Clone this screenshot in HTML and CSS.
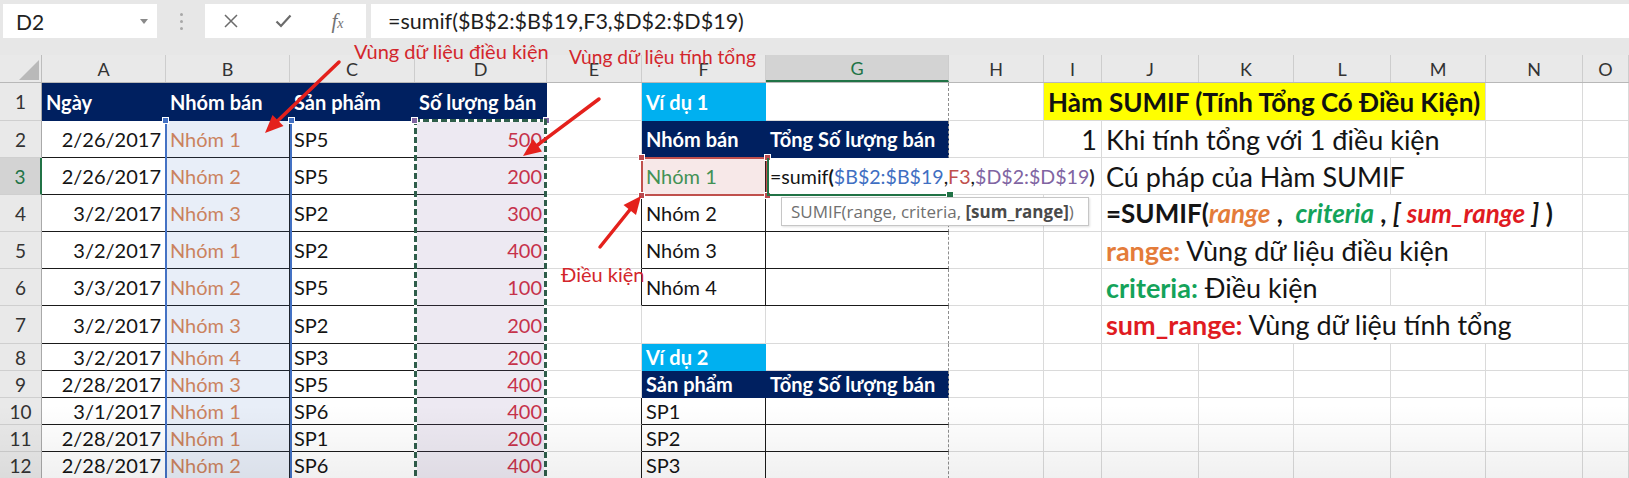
FILE: index.html
```html
<!DOCTYPE html>
<html lang="vi">
<head>
<meta charset="utf-8">
<title>Hàm SUMIF</title>
<link rel="stylesheet" href="styles.css">
</head>
<body>
<div class="toolbar">
  <div class="namebox">D2<span class="dd"></span></div>
  <div class="vdots"><i></i><i></i><i></i></div>
  <div class="fxbtns">
    <span class="btn"><svg width="14" height="14" viewBox="0 0 14 14"><path d="M1 1L13 13M13 1L1 13" stroke="#6b6b6b" stroke-width="1.5" fill="none"/></svg></span>
    <span class="btn"><svg width="17" height="14" viewBox="0 0 17 14"><path d="M1.5 7.5L6 12L15.5 1.5" stroke="#6b6b6b" stroke-width="2.2" fill="none"/></svg></span>
    <span class="btn fx">f<span>x</span></span>
  </div>
  <div class="formula">=sumif($B$2:$B$19,F3,$D$2:$D$19)</div>
</div>

<div class="sheet">
  <div class="colhdr">
    <div class="corner"><span class="tri"></span></div>
    <div>A</div><div>B</div><div>C</div><div>D</div><div>E</div><div>F</div><div class="sel">G</div><div>H</div><div>I</div><div>J</div><div>K</div><div>L</div><div>M</div><div>N</div><div>O</div>
  </div>

  <div class="row r1">
    <div class="rh">1</div>
    <div class="c h">Ngày</div><div class="c h">Nhóm bán</div><div class="c h">Sản phẩm</div><div class="c h">Số lượng bán</div>
    <div class="c"></div>
    <div class="c cy">Ví dụ 1</div><div class="c pb"></div>
    <div class="c"></div>
    <div class="c yl s5">Hàm SUMIF (Tính Tổng Có Điều Kiện)</div>
    <div class="c"></div><div class="c"></div>
  </div>

  <div class="row rt">
    <div class="rh">2</div>
    <div class="c bd n">2/26/2017</div><div class="c bd o">Nhóm 1</div><div class="c bd">SP5</div><div class="c bd n red">500</div>
    <div class="c"></div>
    <div class="c h">Nhóm bán</div><div class="c h pb">Tổng Số lượng bán</div>
    <div class="c"></div>
    <div class="c n big">1</div>
    <div class="c big s4">Khi tính tổng với 1 điều kiện</div>
    <div class="c"></div><div class="c"></div>
  </div>

  <div class="row rt">
    <div class="rh sel">3</div>
    <div class="c bd n">2/26/2017</div><div class="c bd o">Nhóm 2</div><div class="c bd">SP5</div><div class="c bd n red">200</div>
    <div class="c bl"></div>
    <div class="c bd g">Nhóm 1</div>
    <div class="c s3 fm"><span>=sumif<b>(</b><span class="fb">$B$2:$B$19</span>,<span class="fr">F3</span>,<span class="fp">$D$2:$D$19</span><b>)</b></span></div>
    <div class="c big s3">Cú pháp của Hàm SUMIF</div>
    <div class="c"></div><div class="c"></div><div class="c"></div>
  </div>

  <div class="row rt">
    <div class="rh">4</div>
    <div class="c bd n">3/2/2017</div><div class="c bd o">Nhóm 3</div><div class="c bd">SP2</div><div class="c bd n red">300</div>
    <div class="c bl"></div>
    <div class="c bd">Nhóm 2</div><div class="c bd pb"></div>
    <div class="c"></div><div class="c"></div>
    <div class="c big s5 syn"><span>=SUMIF(<i class="io">range</i> ,&nbsp; <i class="ig">criteria</i> , <i>[</i> <i class="ir">sum_range</i> <i>]</i> )</span></div>
    <div class="c"></div>
  </div>

  <div class="row rt">
    <div class="rh">5</div>
    <div class="c bd n">3/2/2017</div><div class="c bd o">Nhóm 1</div><div class="c bd">SP2</div><div class="c bd n red">400</div>
    <div class="c bl"></div>
    <div class="c bd">Nhóm 3</div><div class="c bd pb"></div>
    <div class="c"></div><div class="c"></div>
    <div class="c big s4"><span><b class="ko">range:</b> Vùng dữ liệu điều kiện</span></div>
    <div class="c"></div><div class="c"></div>
  </div>

  <div class="row rt">
    <div class="rh">6</div>
    <div class="c bd n">3/3/2017</div><div class="c bd o">Nhóm 2</div><div class="c bd">SP5</div><div class="c bd n red">100</div>
    <div class="c bl"></div>
    <div class="c bd">Nhóm 4</div><div class="c bd pb"></div>
    <div class="c"></div><div class="c"></div>
    <div class="c big s3"><span><b class="kg">criteria:</b> Điều kiện</span></div>
    <div class="c"></div><div class="c"></div><div class="c"></div>
  </div>

  <div class="row rt7">
    <div class="rh">7</div>
    <div class="c bd n">3/2/2017</div><div class="c bd o">Nhóm 3</div><div class="c bd">SP2</div><div class="c bd n red">200</div>
    <div class="c"></div>
    <div class="c"></div><div class="c pb"></div>
    <div class="c"></div><div class="c"></div>
    <div class="c big s5"><span><b class="kr">sum_range:</b> Vùng dữ liệu tính tổng</span></div>
    <div class="c"></div>
  </div>

  <div class="row rs">
    <div class="rh">8</div>
    <div class="c bd n">3/2/2017</div><div class="c bd o">Nhóm 4</div><div class="c bd">SP3</div><div class="c bd n red">200</div>
    <div class="c"></div>
    <div class="c cy">Ví dụ 2</div><div class="c pb"></div>
    <div class="c"></div><div class="c"></div><div class="c"></div><div class="c"></div><div class="c"></div><div class="c"></div><div class="c"></div><div class="c"></div>
  </div>

  <div class="row rs">
    <div class="rh">9</div>
    <div class="c bd n">2/28/2017</div><div class="c bd o">Nhóm 3</div><div class="c bd">SP5</div><div class="c bd n red">400</div>
    <div class="c"></div>
    <div class="c h">Sản phẩm</div><div class="c h pb">Tổng Số lượng bán</div>
    <div class="c"></div><div class="c"></div><div class="c"></div><div class="c"></div><div class="c"></div><div class="c"></div><div class="c"></div><div class="c"></div>
  </div>

  <div class="row rs">
    <div class="rh">10</div>
    <div class="c bd n">3/1/2017</div><div class="c bd o">Nhóm 1</div><div class="c bd">SP6</div><div class="c bd n red">400</div>
    <div class="c bl"></div>
    <div class="c bd">SP1</div><div class="c bd pb"></div>
    <div class="c"></div><div class="c"></div><div class="c"></div><div class="c"></div><div class="c"></div><div class="c"></div><div class="c"></div><div class="c"></div>
  </div>

  <div class="row rs">
    <div class="rh">11</div>
    <div class="c bd n">2/28/2017</div><div class="c bd o">Nhóm 1</div><div class="c bd">SP1</div><div class="c bd n red">200</div>
    <div class="c bl"></div>
    <div class="c bd">SP2</div><div class="c bd pb"></div>
    <div class="c"></div><div class="c"></div><div class="c"></div><div class="c"></div><div class="c"></div><div class="c"></div><div class="c"></div><div class="c"></div>
  </div>

  <div class="row rs">
    <div class="rh">12</div>
    <div class="c bd n">2/28/2017</div><div class="c bd o">Nhóm 2</div><div class="c bd">SP6</div><div class="c bd n red">400</div>
    <div class="c bl"></div>
    <div class="c bd">SP3</div><div class="c bd pb"></div>
    <div class="c"></div><div class="c"></div><div class="c"></div><div class="c"></div><div class="c"></div><div class="c"></div><div class="c"></div><div class="c"></div>
  </div>
</div>

<!-- overlays: range highlights, tooltip, annotations -->
<div class="rng-b"><span class="hd hd-tl"></span><span class="hd hd-tr"></span></div>
<div class="rng-d"><span class="ants-top"></span><span class="hd hd-tl"></span><span class="hd hd-tr"></span></div>
<div class="rng-f"><span class="hd hd-tl"></span><span class="hd hd-tr"></span><span class="hd hd-bl"></span><span class="hd hd-br"></span></div>
<div class="active"><span class="fill-handle"></span></div>
<div class="tip"><span>SUMIF(range, criteria, <b>[sum_range]</b>)</span></div>

<div class="note note1">Vùng dữ liệu điều kiện</div>
<div class="note note2">Vùng dữ liệu tính tổng</div>
<div class="note note3">Điều kiện</div>

<svg class="arrows" width="1629" height="478" viewBox="0 0 1629 478">
  <g stroke="#e4211c" stroke-width="3.5" stroke-linecap="round" fill="none">
    <line x1="339" y1="62" x2="278" y2="120.5"/>
    <line x1="599" y1="99" x2="537.4" y2="145.2"/>
    <line x1="600" y1="247" x2="629.7" y2="210"/>
  </g>
  <g fill="#e4211c">
    <polygon points="265,133 283.5,126 272.5,115"/>
    <polygon points="523,156 542,151.5 533,139"/>
    <polygon points="641,196 636,215 623.5,205"/>
  </g>
</svg>
<div class="shade"></div>
</body>
</html>
```

FILE: styles.css
```css
* { box-sizing: border-box; margin: 0; padding: 0; }

html, body {
  width: 1629px;
  height: 478px;
  overflow: hidden;
  background: #ffffff;
}

body {
  position: relative;
  font-family: Lato, "Liberation Sans", sans-serif;
  color: #111;
  --cols: 42px 124px 124px 125px 132px 95px 124px 183px 95px 58px 97px 95px 97px 95px 97px 46px;
}

/* ---------- toolbar ---------- */
.toolbar {
  height: 55px;
  background: #e7e7e7;
  display: flex;
  align-items: flex-start;
  padding-top: 4px;
}

.namebox {
  position: relative;
  margin-left: 3px;
  width: 154px;
  height: 34px;
  background: #fff;
  display: flex;
  align-items: center;
  padding-left: 13px;
  font-size: 21px;
  color: #222;
}

.namebox .dd {
  position: absolute;
  right: 9px;
  top: 15px;
  border-left: 4px solid transparent;
  border-right: 4px solid transparent;
  border-top: 5px solid #8a8a8a;
}

.vdots {
  width: 48px;
  height: 34px;
  display: flex;
  flex-direction: column;
  align-items: center;
  justify-content: center;
  gap: 4px;
}

.vdots i {
  display: block;
  width: 3px;
  height: 3px;
  border-radius: 50%;
  background: #a8a8a8;
}

.fxbtns {
  width: 161px;
  height: 34px;
  background: #fff;
  display: grid;
  grid-template-columns: 52px 52px 57px;
  align-items: center;
  justify-items: center;
}

.btn { display: flex; align-items: center; justify-content: center; }

.fx {
  font-family: "Liberation Serif", serif;
  font-style: italic;
  font-size: 21px;
  color: #737373;
}

.fx span { font-size: 14px; margin-top: 6px; }

.formula {
  flex: 1;
  margin-left: 5px;
  height: 34px;
  background: #fff;
  display: flex;
  align-items: center;
  padding-left: 17px;
  font-size: 21.5px;
  color: #1e1e1e;
}

/* ---------- sheet ---------- */
.colhdr {
  display: grid;
  grid-template-columns: var(--cols);
  height: 28px;
  background: #e9e9e9;
  border-bottom: 1px solid #b8b8b8;
}

.colhdr > div {
  display: flex;
  align-items: center;
  justify-content: center;
  border-right: 1px solid #cdcdcd;
  font-size: 18px;
  color: #333;
}

.colhdr > div.sel {
  background: #d3d3d3;
  color: #217346;
  border-bottom: 2px solid #217346;
}

.colhdr .corner {
  position: relative;
  border-right: 1px solid #bdbdbd;
}

.corner .tri {
  position: absolute;
  right: 2px;
  bottom: 2px;
  border-left: 20px solid transparent;
  border-bottom: 20px solid #b9b9b9;
}

.row {
  display: grid;
  grid-template-columns: var(--cols);
}

.r1 { height: 38px; }
.rt { height: 37px; }
.rt7 { height: 38px; }
.rs { height: 27px; }

.rh {
  display: flex;
  align-items: center;
  justify-content: center;
  background: #e9e9e9;
  border-right: 1px solid #a9a9a9;
  border-bottom: 1px solid #cfcfcf;
  font-size: 19px;
  color: #333;
}

.rh.sel {
  background: #d3d3d3;
  color: #217346;
  border-right: 2px solid #217346;
}

.c {
  display: flex;
  align-items: center;
  padding: 0 4px;
  white-space: nowrap;
  border-right: 1px solid #dadada;
  border-bottom: 1px solid #dadada;
  font-size: 20px;
  color: #141414;
}

.s2 { grid-column: span 2; }
.s3 { grid-column: span 3; }
.s4 { grid-column: span 4; }
.s5 { grid-column: span 5; }

.n { justify-content: flex-end; }

.bd { border-right-color: #1a1a1a; border-bottom-color: #1a1a1a; }
.bl { border-right-color: #1a1a1a; }

.h {
  background: #002060;
  color: #fff;
  font-weight: 700;
  border-right-color: #002060;
  border-bottom-color: #002060;
}

.cy {
  background: #00b0f0;
  color: #fff;
  font-weight: 700;
  border-right-color: #00b0f0;
  border-bottom-color: #00b0f0;
}

.pb { border-right: 1px dashed #8e8e8e; }

.o { color: #de8550; }
.red { color: #d22a3c; }
.g { color: #2f9c57; }

.fm { font-size: 19.6px; }
.fm b { font-weight: 700; }
.fb { color: #3f6fc2; }
.fr { color: #c0504d; }
.fp { color: #8064a2; }

.yl {
  background: #ffff00;
  font-weight: 700;
  font-size: 26px;
  color: #111;
  border-right-color: #dadada;
}

.big { font-size: 27px; }

.syn { font-weight: 700; font-size: 26px; }
.syn i { font-style: italic; }
.io { color: #e47c3a; }
.ig { color: #14a35a; }
.ir { color: #e01b22; }

.ko { color: #e47c3a; }
.kg { color: #14a35a; }
.kr { color: #e01b22; }

/* ---------- overlays ---------- */
.rng-b {
  position: absolute;
  left: 165px;
  top: 121px;
  width: 127px;
  height: 400px;
  border-left: 2px solid #4472c4;
  border-right: 2px solid #4472c4;
  background: rgba(68, 114, 196, 0.12);
}

.rng-d {
  position: absolute;
  left: 414px;
  top: 119px;
  width: 133px;
  height: 400px;
  background: rgba(128, 100, 162, 0.14);
}

.rng-d::before,
.rng-d::after {
  content: "";
  position: absolute;
  top: 0;
  bottom: 0;
  width: 3px;
  background: repeating-linear-gradient(to bottom, #2f5e4b 0 6px, #ffffff 6px 9px);
}

.rng-d::before { left: 0; }
.rng-d::after { right: 0; }

.ants-top {
  position: absolute;
  left: 0;
  right: 0;
  top: 0;
  height: 3px;
  background: repeating-linear-gradient(to right, #2f5e4b 0 6px, #ffffff 6px 9px);
}

.rng-f {
  position: absolute;
  left: 641px;
  top: 157px;
  width: 127px;
  height: 39px;
  border: 2px solid #c0504d;
  background: rgba(192, 80, 77, 0.13);
}

.hd {
  position: absolute;
  width: 7px;
  height: 7px;
  border: 1px solid #fff;
}

.rng-b .hd { background: #4472c4; top: -4px; }
.rng-b .hd-tl { left: -5px; }
.rng-b .hd-tr { right: -5px; }

.rng-d .hd { background: #8064a2; top: -2px; }
.rng-d .hd-tl { left: -3px; }
.rng-d .hd-tr { right: -3px; }

.rng-f .hd { background: #b94a4f; }
.rng-f .hd-tl { left: -5px; top: -5px; }
.rng-f .hd-tr { right: -5px; top: -5px; }
.rng-f .hd-bl { left: -5px; bottom: -5px; }
.rng-f .hd-br { right: -5px; bottom: -5px; }

.active {
  position: absolute;
  left: 767px;
  top: 158px;
  width: 183px;
  height: 38px;
  border-left: 2px solid #217346;
  border-bottom: 2px solid #217346;
}

.fill-handle {
  position: absolute;
  right: -4px;
  bottom: -5px;
  width: 8px;
  height: 8px;
  background: #217346;
  border: 1px solid #fff;
}

.tip {
  position: absolute;
  left: 781px;
  top: 197px;
  width: 308px;
  height: 29px;
  display: flex;
  align-items: center;
  padding-left: 9px;
  background: #fff;
  border: 1px solid #c6c6c6;
  box-shadow: 1px 1px 2px rgba(0, 0, 0, 0.12);
  font-family: "Open Sans", "Liberation Sans", sans-serif;
  font-size: 17px;
  color: #707070;
  white-space: nowrap;
}

.tip b { color: #4a4a4a; font-weight: 700; }

.note {
  position: absolute;
  font-size: 20px;
  line-height: 22px;
  color: #d3262c;
  white-space: nowrap;
}

.note1 { left: 354px; top: 40px; }
.note2 { left: 569px; top: 46px; font-size: 19.2px; }
.note3 { left: 561px; top: 263px; }

.arrows {
  position: absolute;
  left: 0;
  top: 0;
  pointer-events: none;
}

.shade {
  position: absolute;
  left: 0;
  right: 0;
  top: 405px;
  height: 73px;
  background: linear-gradient(to bottom, rgba(0, 0, 0, 0), rgba(0, 0, 0, 0.06));
  pointer-events: none;
}
```
